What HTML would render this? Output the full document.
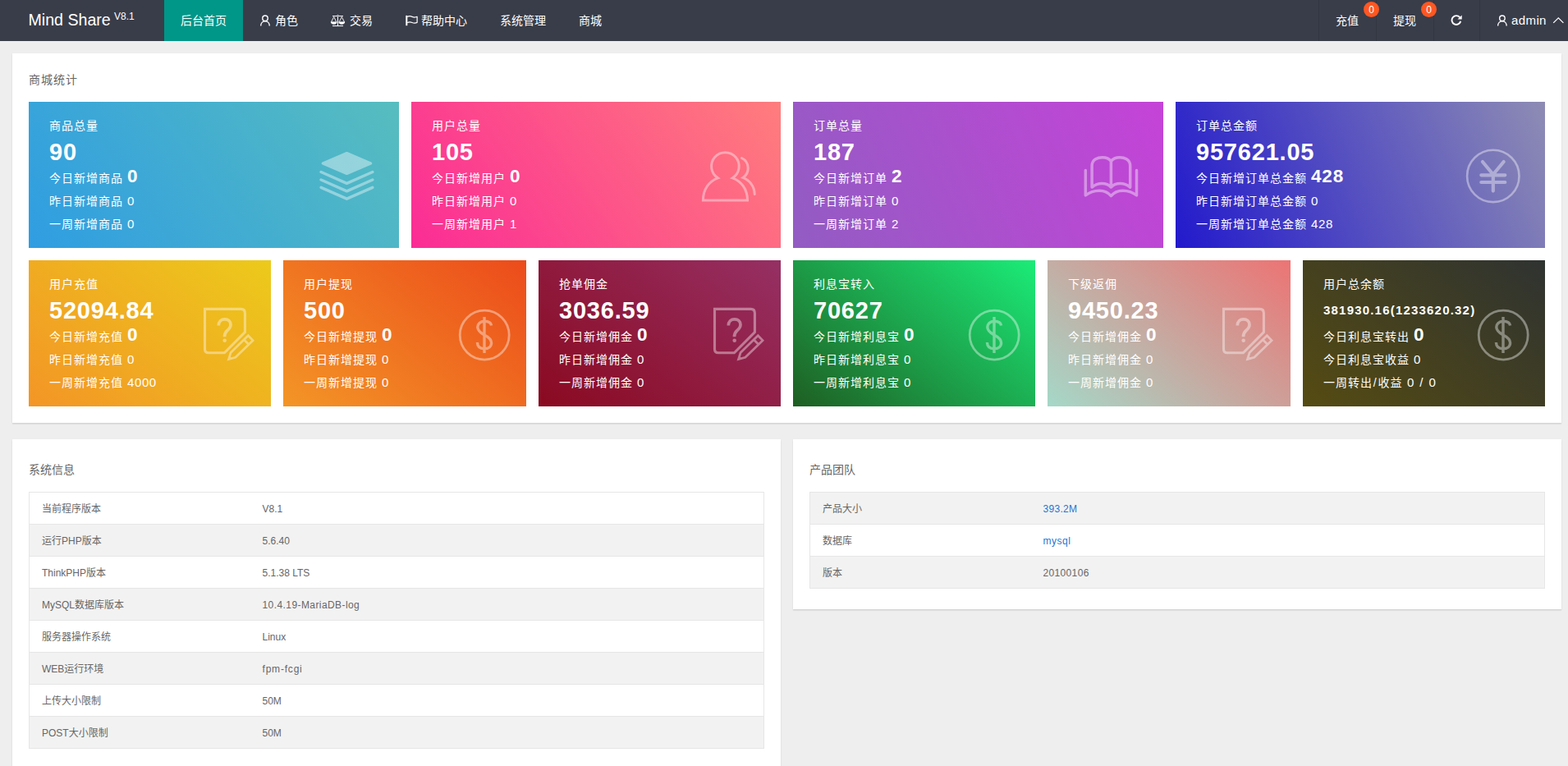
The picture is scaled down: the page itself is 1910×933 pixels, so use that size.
<!DOCTYPE html>
<html lang="zh-CN">
<head>
<meta charset="utf-8">
<title>Mind Share</title>
<style>
*{box-sizing:border-box;margin:0;padding:0}
html,body{width:1910px;height:933px;overflow:hidden}
body{background:#eeeeee;font-family:"Liberation Sans","Noto Sans CJK SC",sans-serif;font-size:14px;color:#333;line-height:24px;position:relative}
svg{display:block;position:absolute;overflow:visible}
.hd{position:absolute;left:0;top:0;width:1910px;height:50px;background:#393d49;color:#fff}
.hd .logo{position:absolute;left:34.5px;top:0;line-height:49px;font-size:19.6px;white-space:nowrap;letter-spacing:0}
.hd .ver{position:absolute;left:139px;top:0;line-height:40px;font-size:12px;white-space:nowrap}
.hd .it{position:absolute;top:0;height:50px;line-height:50px;font-size:14px;white-space:nowrap}
.hd .act{background:#009688;left:200px;width:96px;text-align:center}
.hd .sep{position:absolute;top:0;width:1px;height:50px;background:#323641}
.hd .bdg{position:absolute;top:2px;width:19px;height:19px;border-radius:10px;background:#ff5722;color:#fff;font-size:12px;line-height:21px;text-align:center}
.box{position:absolute;background:#fff;box-shadow:0 1px 2px 0 rgba(0,0,0,.1),0 2px 1px 0 rgba(0,0,0,.03)}
.ttl{position:absolute;left:20px;top:20px;line-height:24px;font-size:14px;color:#666}
.st{position:absolute;height:178px;color:#fff;font-size:14px;letter-spacing:1px;white-space:nowrap;overflow:hidden}
.st div{position:absolute;left:25px}
.st .t{top:15px;line-height:28px}
.st .n{top:43px;line-height:36px;font-size:29px;font-weight:bold;letter-spacing:.8px}
.st .n.s{font-size:15px;letter-spacing:1.2px}
.st .a{top:77px;line-height:28px}
.st .a span{position:relative;top:0}
.st .b{top:107px;line-height:28px}
.st .c{top:135px;line-height:28px}
.st .a b{font-size:22.5px;font-weight:bold;margin-left:5px;letter-spacing:.8px}
.st i{font-style:normal;margin-left:5px;font-size:15px;letter-spacing:.6px}
table{position:absolute;left:20px;top:64px;width:896px;border-collapse:collapse;font-size:12px;color:#666;table-layout:fixed;border:1px solid #e6e6e6}
td{border-top:1px solid #e6e6e6;border-bottom:1px solid #e6e6e6;height:39px;padding:2px 15px 0;line-height:20px}
td:first-child{width:269px}
tr.g td{background:#f2f2f2}
.lk{color:#1e76d0}
.st u{text-decoration:none;margin:0 .8px}
.st em{font-style:normal;word-spacing:1.6px;margin-left:.5px}
</style>
</head>
<body>
<div class="hd">
  <div class="logo">Mind Share</div><div class="ver">V8.1</div>
  <div class="it act">后台首页</div>
  <svg style="left:316px;top:17px" width="14" height="16" viewBox="316 17 14 16"><g fill="none" stroke="#fff" stroke-width="1.4"><circle cx="323" cy="22.3" r="3.25"/><path d="M317.7 31.4C317.7 28.2 320 25.8 323 25.8C326 25.8 328.3 28.2 328.3 31.4"/></g></svg>
  <div class="it" style="left:335px">角色</div>
  <svg style="left:401px;top:17px" width="22" height="17" viewBox="401 17 22 17"><g fill="none" stroke="#fff" stroke-width="1"><path d="M405 19.6L418 19.6M411.5 19.6L411.5 31.6M405 31.6L418 31.6"/><path d="M406.7 20.6L403.4 27L410 27Z M416.3 20.6L413 27L419.6 27Z" stroke-width=".9" stroke-linejoin="round"/></g><path d="M402.8 26.8L410.6 26.8C410.6 28.5 408.9 29.7 406.7 29.7C404.5 29.7 402.8 28.5 402.8 26.8ZM412.4 26.8L420.2 26.8C420.2 28.5 418.5 29.7 416.3 29.7C414.1 29.7 412.4 28.5 412.4 26.8Z" fill="#fff"/><circle cx="411.5" cy="19.3" r=".9" fill="#393d49" stroke="#fff" stroke-width=".8"/></svg>
  <div class="it" style="left:426px">交易</div>
  <svg style="left:493px;top:17px" width="17" height="16" viewBox="493 17 17 16"><g fill="none" stroke="#fff"><path d="M495.3 18.9L495.3 31.2" stroke-width="2"/><path d="M496.2 20.4C498.2 19.4 500.2 19.6 502 20.4C503.9 21.2 506 21.3 508.1 20.3L508.1 27.4C506 28.4 503.9 28.3 502 27.5C500.2 26.7 498.2 26.6 496.2 27.6" stroke-width="1.2" stroke-linejoin="round"/></g></svg>
  <div class="it" style="left:513px">帮助中心</div>
  <div class="it" style="left:609px">系统管理</div>
  <div class="it" style="left:705px">商城</div>
  <div class="sep" style="left:1606px"></div>
  <div class="sep" style="left:1676px"></div>
  <div class="sep" style="left:1746px"></div>
  <div class="sep" style="left:1802px"></div>
  <div class="it" style="left:1627px">充值</div>
  <div class="bdg" style="left:1661px">0</div>
  <div class="it" style="left:1697px">提现</div>
  <div class="bdg" style="left:1731px">0</div>
  <svg style="left:1766px;top:17px" width="16" height="16" viewBox="1766 17 16 16"><path d="M1778.2 21.2A5.4 5.4 0 1 0 1779.2 25.8" fill="none" stroke="#fff" stroke-width="1.9"/><path d="M1780.7 18.4L1780.7 23.6L1775.5 23.6Z" fill="#fff"/></svg>
  <svg style="left:1823px;top:17px" width="14" height="16" viewBox="1823 17 14 16"><g fill="none" stroke="#fff" stroke-width="1.4"><circle cx="1829.9" cy="22.3" r="3.25"/><path d="M1824.6 31.4C1824.6 28.2 1826.9 25.8 1829.9 25.8C1832.9 25.8 1835.2 28.2 1835.2 31.4"/></g></svg>
  <div class="it" style="left:1841px;font-size:15px;letter-spacing:.4px">admin</div>
  <svg style="left:1890px;top:19px" width="16" height="11" viewBox="1890 19 16 11"><path d="M1892.2 27.9L1898.3 21.8L1904.4 27.9" fill="none" stroke="#fff" stroke-width="1.3"/></svg>
</div>

<div class="box" style="left:15px;top:65px;width:1887px;height:450px">
  <div class="ttl" style="letter-spacing:1px">商城统计</div>
  <div class="st" style="left:20px;top:59px;width:451px;background:linear-gradient(-125deg,#57bdbf,#2f9de2)">
    <div class="t">商品总量</div><div class="n">90</div>
    <div class="a"><span>今日新增商品</span><b>0</b></div><div class="b">昨日新增商品<i>0</i></div><div class="c">一周新增商品<i>0</i></div>
    <svg style="left:354px;top:59px" width="68" height="62" viewBox="0 0 68 62"><g opacity=".4" fill="none" stroke="#fff" stroke-width="3.5" stroke-linecap="round" stroke-linejoin="round"><path d="M2.1 26.5L33.45 40.3L64.8 26.5"/><path d="M2.1 36L33.45 49.8L64.8 36"/><path d="M2.1 45.4L33.45 59.2L64.8 45.4"/><path d="M4.3 16L33.45 3.6L62.6 16L33.45 28.4Z" fill="#fff" stroke-width="3.4"/></g></svg>
  </div>
  <div class="st" style="left:486px;top:59px;width:450px;background:linear-gradient(-125deg,#ff7d7d,#fb2c95)">
    <div class="t">用户总量</div><div class="n">105</div>
    <div class="a"><span>今日新增用户</span><b>0</b></div><div class="b">昨日新增用户<i>0</i></div><div class="c">一周新增用户<i>1</i></div>
    <svg style="left:352px;top:58px" width="70" height="66" viewBox="0 0 70 66"><g opacity=".4" fill="none" stroke="#fff" stroke-width="3"><path d="M3.4 62C3.4 48.5 11 38.5 21.5 34.8A16.85 16.85 0 1 1 39.3 34.8C49.8 38.5 57.5 48.5 57.5 62Z" stroke-linejoin="miter"/><path d="M50.5 10.5A13.8 13.8 0 0 1 52 34.4C60 37.5 66.2 45 66.2 54.6" stroke-linecap="round"/></g></svg>
  </div>
  <div class="st" style="left:951px;top:59px;width:451px;background:linear-gradient(-113deg,#c543d8,#925cc3)">
    <div class="t">订单总量</div><div class="n">187</div>
    <div class="a"><span>今日新增订单</span><b>2</b></div><div class="b">昨日新增订单<i>0</i></div><div class="c">一周新增订单<i>2</i></div>
    <svg style="left:352px;top:64px" width="72" height="56" viewBox="0 0 72 56"><g opacity=".4" fill="none" stroke="#fff" stroke-width="3.5" stroke-linecap="round" stroke-linejoin="round"><path d="M35.4 8.4C33.3 5.5 29.3 3.7 24.8 3.7C19.8 3.7 12.1 6 12.1 14L12.1 40.1C15.8 37 19.8 35.5 24.3 35.5C28.8 35.5 32.8 37 35.4 40C38 37 42 35.5 46.5 35.5C51 35.5 55 37 58.7 40.1L58.7 14C58.7 6 51 3.7 46 3.7C41.5 3.7 37.5 5.5 35.4 8.4L35.4 40"/><path d="M4.3 19.4L4.3 49.9C9.2 46.2 14.2 44.2 21 44.2C27 44.2 32 46.4 35.4 50.6C38.8 46.4 43.8 44.2 49.8 44.2C56.6 44.2 61.6 46.2 66.5 49.9L66.5 19.4"/></g></svg>
  </div>
  <div class="st" style="left:1417px;top:59px;width:450px;background:linear-gradient(-113deg,#8e8cb4,#2219cc)">
    <div class="t">订单总金额</div><div class="n">957621.05</div>
    <div class="a"><span>今日新增订单总金额</span><b>428</b></div><div class="b">昨日新增订单总金额<i>0</i></div><div class="c">一周新增订单总金额<i>428</i></div>
    <svg style="left:353px;top:57px" width="68" height="68" viewBox="0 0 68 68"><g opacity=".4" fill="none" stroke="#fff"><circle cx="33.8" cy="33.4" r="31.7" stroke-width="2.6"/><path d="M20.9 16L33.8 31.5L46.7 16M33.8 31.5L33.8 51.6M19.3 32.3L48.3 32.3M19.3 41L48.3 41" stroke-width="4.2" stroke-linecap="round" stroke-linejoin="round"/></g></svg>
  </div>
  <div class="st" style="left:20px;top:252px;width:295px;background:linear-gradient(-141deg,#ecca1b,#f39526)">
    <div class="t">用户充值</div><div class="n">52094.84</div>
    <div class="a"><span>今日新增充值</span><b>0</b></div><div class="b">昨日新增充值<i>0</i></div><div class="c">一周新增充值<i>4000</i></div>
    <svg style="left:211.0px;top:56px" width="68" height="68" viewBox="0 0 68 68"><g opacity=".4" fill="none" stroke="#fff" stroke-width="3.1"><path d="M52.4 31.6L52.4 8.3Q52.4 3.4 47.4 3.4L3.5 3.4L3.5 52.3Q3.5 56.8 8 56.8L27.4 56.8Z" stroke-linejoin="miter"/><path d="M20.3 23.5C20.3 18.5 23.5 15.8 27.8 15.8C32 15.8 35 18.5 35 22.5C35 26 33 27.8 30.5 30C28.3 32 27.5 33.5 27.5 37.2" stroke-width="3.7"/><g transform="translate(31.5 65.6) rotate(-44.2)" stroke-width="2.8"><path d="M1.5 0L9 -4.1L38.6 -4.1L38.6 4.1L9 4.1Z"/><path d="M31.5 -4.1L31.5 4.1"/><path d="M1 0L4.5 -1.6L4.5 1.6Z" fill="#fff" stroke-width="1"/></g><circle cx="27.7" cy="41.7" r="2.3" fill="#fff" stroke="none"/></g></svg>
  </div>
  <div class="st" style="left:330px;top:252px;width:296px;background:linear-gradient(-141deg,#ec4b1b,#f39526)">
    <div class="t">用户提现</div><div class="n">500</div>
    <div class="a"><span>今日新增提现</span><b>0</b></div><div class="b">昨日新增提现<i>0</i></div><div class="c">一周新增提现<i>0</i></div>
    <svg style="left:212.1px;top:58px" width="68" height="68" viewBox="0 0 68 68"><g opacity=".4" fill="none" stroke="#fff"><circle cx="33.2" cy="33.1" r="30" stroke-width="2.8"/><path d="M41.6 21.5C41 17.5 37 16.3 33 16.3C28 16.3 24.8 19.5 24.8 23.5C24.8 28 28.5 30.5 33 33C38 35.5 41.6 38 41.6 42.5C41.6 47 38 49.8 33 49.8C28 49.8 24.6 47.5 24.4 42M33 11.1L33 55" stroke-width="3.4"/></g></svg>
  </div>
  <div class="st" style="left:641px;top:252px;width:295px;background:linear-gradient(-141deg,#963064,#8a0920)">
    <div class="t">抢单佣金</div><div class="n">3036.59</div>
    <div class="a"><span>今日新增佣金</span><b>0</b></div><div class="b">昨日新增佣金<i>0</i></div><div class="c">一周新增佣金<i>0</i></div>
    <svg style="left:210.67px;top:56px" width="68" height="68" viewBox="0 0 68 68"><g opacity=".4" fill="none" stroke="#fff" stroke-width="3.1"><path d="M52.4 31.6L52.4 8.3Q52.4 3.4 47.4 3.4L3.5 3.4L3.5 52.3Q3.5 56.8 8 56.8L27.4 56.8Z" stroke-linejoin="miter"/><path d="M20.3 23.5C20.3 18.5 23.5 15.8 27.8 15.8C32 15.8 35 18.5 35 22.5C35 26 33 27.8 30.5 30C28.3 32 27.5 33.5 27.5 37.2" stroke-width="3.7"/><g transform="translate(31.5 65.6) rotate(-44.2)" stroke-width="2.8"><path d="M1.5 0L9 -4.1L38.6 -4.1L38.6 4.1L9 4.1Z"/><path d="M31.5 -4.1L31.5 4.1"/><path d="M1 0L4.5 -1.6L4.5 1.6Z" fill="#fff" stroke-width="1"/></g><circle cx="27.7" cy="41.7" r="2.3" fill="#fff" stroke="none"/></g></svg>
  </div>
  <div class="st" style="left:951px;top:252px;width:295px;background:linear-gradient(-141deg,#1bec78,#1e5e22)">
    <div class="t">利息宝转入</div><div class="n">70627</div>
    <div class="a"><span>今日新增利息宝</span><b>0</b></div><div class="b">昨日新增利息宝<i>0</i></div><div class="c">一周新增利息宝<i>0</i></div>
    <svg style="left:211.77px;top:58px" width="68" height="68" viewBox="0 0 68 68"><g opacity=".4" fill="none" stroke="#fff"><circle cx="33.2" cy="33.1" r="30" stroke-width="2.8"/><path d="M41.6 21.5C41 17.5 37 16.3 33 16.3C28 16.3 24.8 19.5 24.8 23.5C24.8 28 28.5 30.5 33 33C38 35.5 41.6 38 41.6 42.5C41.6 47 38 49.8 33 49.8C28 49.8 24.6 47.5 24.4 42M33 11.1L33 55" stroke-width="3.4"/></g></svg>
  </div>
  <div class="st" style="left:1261px;top:252px;width:296px;background:linear-gradient(-141deg,#ec7474,#a5d8c8)">
    <div class="t">下级返佣</div><div class="n">9450.23</div>
    <div class="a"><span>今日新增佣金</span><b>0</b></div><div class="b">昨日新增佣金<i>0</i></div><div class="c">一周新增佣金<i>0</i></div>
    <svg style="left:211.33px;top:56px" width="68" height="68" viewBox="0 0 68 68"><g opacity=".4" fill="none" stroke="#fff" stroke-width="3.1"><path d="M52.4 31.6L52.4 8.3Q52.4 3.4 47.4 3.4L3.5 3.4L3.5 52.3Q3.5 56.8 8 56.8L27.4 56.8Z" stroke-linejoin="miter"/><path d="M20.3 23.5C20.3 18.5 23.5 15.8 27.8 15.8C32 15.8 35 18.5 35 22.5C35 26 33 27.8 30.5 30C28.3 32 27.5 33.5 27.5 37.2" stroke-width="3.7"/><g transform="translate(31.5 65.6) rotate(-44.2)" stroke-width="2.8"><path d="M1.5 0L9 -4.1L38.6 -4.1L38.6 4.1L9 4.1Z"/><path d="M31.5 -4.1L31.5 4.1"/><path d="M1 0L4.5 -1.6L4.5 1.6Z" fill="#fff" stroke-width="1"/></g><circle cx="27.7" cy="41.7" r="2.3" fill="#fff" stroke="none"/></g></svg>
  </div>
  <div class="st" style="left:1572px;top:252px;width:295px;background:linear-gradient(-141deg,#2f3331,#554b12)">
    <div class="t">用户总余额</div><div class="n s">381930.16(1233620.32)</div>
    <div class="a"><span>今日利息宝转出</span><b>0</b></div><div class="b">今日利息宝收益<i>0</i></div><div class="c">一周转出<u>/</u>收益<i><em>0 / 0</em></i></div>
    <svg style="left:211.43px;top:58px" width="68" height="68" viewBox="0 0 68 68"><g opacity=".4" fill="none" stroke="#fff"><circle cx="33.2" cy="33.1" r="30" stroke-width="2.8"/><path d="M41.6 21.5C41 17.5 37 16.3 33 16.3C28 16.3 24.8 19.5 24.8 23.5C24.8 28 28.5 30.5 33 33C38 35.5 41.6 38 41.6 42.5C41.6 47 38 49.8 33 49.8C28 49.8 24.6 47.5 24.4 42M33 11.1L33 55" stroke-width="3.4"/></g></svg>
  </div>
</div>

<div class="box" style="left:15px;top:535px;width:936px;height:420px">
  <div class="ttl" style="top:25px">系统信息</div>
  <table>
    <tr><td>当前程序版本</td><td>V8.1</td></tr>
    <tr class="g"><td>运行PHP版本</td><td>5.6.40</td></tr>
    <tr><td>ThinkPHP版本</td><td>5.1.38 LTS</td></tr>
    <tr class="g"><td>MySQL数据库版本</td><td><span style="letter-spacing:.42px">10.4.19-MariaDB-log</span></td></tr>
    <tr><td>服务器操作系统</td><td>Linux</td></tr>
    <tr class="g"><td>WEB运行环境</td><td><span style="letter-spacing:.8px">fpm-fcgi</span></td></tr>
    <tr><td>上传大小限制</td><td>50M</td></tr>
    <tr class="g"><td>POST大小限制</td><td>50M</td></tr>
  </table>
</div>

<div class="box" style="left:966px;top:535px;width:936px;height:207px">
  <div class="ttl" style="top:25px">产品团队</div>
  <table>
    <tr class="g"><td>产品大小</td><td class="lk"><span style="letter-spacing:.3px">393.2M</span></td></tr>
    <tr><td>数据库</td><td class="lk"><span style="letter-spacing:.5px">mysql</span></td></tr>
    <tr class="g"><td>版本</td><td><span style="letter-spacing:.35px">20100106</span></td></tr>
  </table>
</div>
</body>
</html>
